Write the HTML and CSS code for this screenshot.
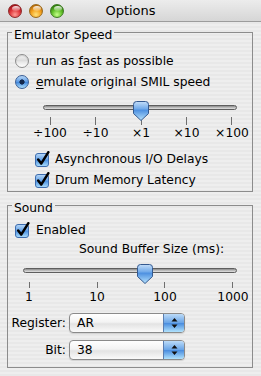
FILE: index.html
```html
<!DOCTYPE html>
<html>
<head>
<meta charset="utf-8">
<title>Options</title>
<link rel="stylesheet" href="styles.css">
</head>
<body>
<svg class="defs" width="0" height="0" aria-hidden="true">
  <defs>
    <linearGradient id="gAqua" x1="0" y1="0" x2="0" y2="1">
      <stop offset="0" stop-color="#b9d9f8"/>
      <stop offset="0.45" stop-color="#6aa6e8"/>
      <stop offset="0.5" stop-color="#4a8fe0"/>
      <stop offset="1" stop-color="#aee0fd"/>
    </linearGradient>
    <linearGradient id="gKnob" x1="0" y1="0" x2="0" y2="1">
      <stop offset="0" stop-color="#c4def9"/>
      <stop offset="0.4" stop-color="#6ea8e9"/>
      <stop offset="0.45" stop-color="#4c8fe0"/>
      <stop offset="1" stop-color="#b8e4fd"/>
    </linearGradient>
  </defs>
</svg>
<div class="window">
  <div class="titlebar">
    <div class="lights">
      <span class="light red"></span>
      <span class="light amber"></span>
      <span class="light green"></span>
    </div>
    <div class="title">Options</div>
    <div></div>
  </div>

  <div class="content">
    <fieldset class="group group-speed">
      <legend>Emulator Speed</legend>
      <div class="radio-row"><span class="radio"></span><span>run as <u>f</u>ast as possible</span></div>
      <div class="radio-row"><span class="radio on"></span><span><u>e</u>mulate original SMIL speed</span></div>

      <div class="slider slider-speed">
        <div class="track"></div>
        <div class="ticks"><i></i><i></i><i></i><i></i><i></i></div>
        <svg class="knob" style="--pos: 0.5" width="16" height="20" viewBox="0 0 16 20">
          <path d="M0.5 3.5 Q0.5 0.5 3.5 0.5 H12.5 Q15.5 0.5 15.5 3.5 V12.5 L8 19.5 L0.5 12.5 Z" fill="url(#gKnob)" stroke="#34598f"/>
        </svg>
      </div>
      <div class="scale scale-speed"><span>÷100</span><span>÷10</span><span>×1</span><span>×10</span><span>×100</span></div>

      <div class="check-row first">
        <svg class="cb" width="16" height="16" viewBox="0 0 16 16"><rect x="0.5" y="2.5" width="13" height="13" rx="2.5" fill="url(#gAqua)" stroke="#3e6cad"/><path d="M3.2 8.6 L6.2 12.6 L13.4 1.2" fill="none" stroke="#000" stroke-width="2.5" stroke-linecap="round" stroke-linejoin="round"/></svg>
        <span>Asynchronous I/O Delays</span>
      </div>
      <div class="check-row">
        <svg class="cb" width="16" height="16" viewBox="0 0 16 16"><rect x="0.5" y="2.5" width="13" height="13" rx="2.5" fill="url(#gAqua)" stroke="#3e6cad"/><path d="M3.2 8.6 L6.2 12.6 L13.4 1.2" fill="none" stroke="#000" stroke-width="2.5" stroke-linecap="round" stroke-linejoin="round"/></svg>
        <span>Drum Memory Latency</span>
      </div>
    </fieldset>

    <fieldset class="group group-sound">
      <legend>Sound</legend>
      <div class="check-row enabled">
        <svg class="cb" width="16" height="16" viewBox="0 0 16 16"><rect x="0.5" y="2.5" width="13" height="13" rx="2.5" fill="url(#gAqua)" stroke="#3e6cad"/><path d="M3.2 8.6 L6.2 12.6 L13.4 1.2" fill="none" stroke="#000" stroke-width="2.5" stroke-linecap="round" stroke-linejoin="round"/></svg>
        <span>Enabled</span>
      </div>
      <div class="buffer-label">Sound Buffer Size (ms):</div>

      <div class="slider slider-sound">
        <div class="track"></div>
        <div class="ticks"><i></i><i></i><i></i><i></i></div>
        <svg class="knob" style="--pos: 0.57" width="16" height="20" viewBox="0 0 16 20">
          <path d="M0.5 3.5 Q0.5 0.5 3.5 0.5 H12.5 Q15.5 0.5 15.5 3.5 V12.5 L8 19.5 L0.5 12.5 Z" fill="url(#gKnob)" stroke="#34598f"/>
        </svg>
      </div>
      <div class="scale scale-sound"><span>1</span><span>10</span><span>100</span><span>1000</span></div>

      <div class="popup-row first">
        <span class="popup-label">Register:</span>
        <div class="popup"><span class="popup-value">AR</span><span class="popup-arrows"><svg width="7" height="12" viewBox="0 0 7 12"><path d="M3.5 1 L6.5 4.5 H0.5 Z M3.5 11 L6.5 7.5 H0.5 Z" fill="#111"/></svg></span></div>
      </div>
      <div class="popup-row">
        <span class="popup-label">Bit:</span>
        <div class="popup"><span class="popup-value">38</span><span class="popup-arrows"><svg width="7" height="12" viewBox="0 0 7 12"><path d="M3.5 1 L6.5 4.5 H0.5 Z M3.5 11 L6.5 7.5 H0.5 Z" fill="#111"/></svg></span></div>
      </div>
    </fieldset>
  </div>
</div>
</body>
</html>
```

FILE: styles.css
```css
* { box-sizing: border-box; }
html, body { margin: 0; padding: 0; }
body {
  width: 261px;
  height: 376px;
  overflow: hidden;
  font-family: "DejaVu Sans", "Lucida Grande", sans-serif;
  font-size: 12.3px;
  color: #000;
  background: repeating-linear-gradient(to bottom, #eeeeee 0 2px, #e8e8e8 2px 4px);
}
.defs { position: absolute; width: 0; height: 0; }
u { text-decoration-thickness: 1px; text-underline-offset: 2px; }

.window { display: flex; flex-direction: column; height: 376px; }

/* title bar */
.titlebar {
  flex: none;
  height: 22px;
  display: grid;
  grid-template-columns: 1fr auto 1fr;
  align-items: center;
  background: linear-gradient(#ececec, #d6d6d6);
  border-bottom: 1px solid #9c9c9c;
}
.lights { display: flex; gap: 7px; padding-left: 8px; }
.light {
  width: 14px; height: 14px; border-radius: 50%;
  position: relative;
}
.light::after {
  content: "";
  position: absolute;
  left: 3px; top: 1px; width: 8px; height: 5px;
  border-radius: 50%;
  background: linear-gradient(rgba(255,255,255,0.9), rgba(255,255,255,0.15));
}
.red { background: radial-gradient(circle at 50% 80%, #ff9d95 0, #e0383c 45%, #a5121a 80%); border: 1px solid #8e2a2a; }
.amber { background: radial-gradient(circle at 50% 80%, #ffe27a 0, #f4a21e 45%, #b86a06 80%); border: 1px solid #9a6a1c; }
.green { background: radial-gradient(circle at 50% 80%, #c6ff8a 0, #62c02a 45%, #2f7d0c 80%); border: 1px solid #3e7a22; }
.title { font-size: 13px; }

/* content */
.content { flex: none; padding: 0 8px 0 7px; }
.group {
  margin: 0;
  padding: 0;
  min-width: 0;
  border: 1px solid #8c8c8c;
}
.group legend {
  margin-left: 4px;
  padding: 6px 2px 0;
  line-height: 14px;
}
.group-speed { padding: 8px 0 1px; }
.group-sound { margin-top: 3px; padding: 5px 0 7px; }

.radio-row {
  display: flex; align-items: center; gap: 7px;
  height: 21px; padding-left: 7px;
}
.radio {
  width: 14px; height: 14px; border-radius: 50%;
  border: 1px solid #8d8d8d;
  background: linear-gradient(#f4f4f4, #dadada 50%, #e6e6e6 55%, #ffffff);
  box-shadow: inset 0 1px 1px rgba(0,0,0,0.15);
}
.radio.on {
  border-color: #3b5f96;
  background:
    radial-gradient(circle, #14284c 0 2.3px, transparent 2.9px),
    linear-gradient(#b5d6f7, #5d9be4 48%, #4187dc 52%, #aedffc);
  box-shadow: none;
}

/* sliders */
.slider { position: relative; display: flow-root; }
.track {
  height: 5px;
  border-radius: 3px;
  border: 1px solid #5e5e5e;
  background: linear-gradient(#8a8a8a, #c4c4c4 60%, #e2e2e2);
}
.ticks { display: flex; justify-content: space-between; }
.ticks i { display: block; width: 1px; background: #6f6f6f; }
.knob {
  position: absolute;
  display: block;
}
.slider-speed { margin-left: 35px; width: 194px; height: 34px; }
.slider-speed .track { margin-top: 13px; }
.slider-speed .ticks { margin-top: 7px; height: 8px; padding: 0 5px 0 7px; }
.slider-speed .knob { top: 9px; left: calc(7px + 181px * var(--pos) - 7.5px); }

.slider-sound { margin-left: 15px; width: 214px; height: 32px; }
.slider-sound .track { margin-top: 11px; }
.slider-sound .ticks { margin-top: 9px; height: 6px; padding: 0 4px 0 6px; }
.slider-sound .knob { top: 7px; left: calc(6px + 203px * var(--pos) - 7.5px); }

.scale { display: flex; justify-content: space-between; }
.scale span { width: 40px; text-align: center; }
.scale-speed { padding-left: 22px; height: 14px; line-height: 14px; }
.scale-sound { padding-left: 1px; margin-right: -1px; height: 16px; line-height: 16px; }

/* checkboxes */
.check-row {
  display: flex; align-items: center; gap: 4px;
  height: 21px; padding-left: 27px;
}
.check-row.first { margin-top: 8px; }
.check-row.enabled { height: 20px; padding-left: 7px; gap: 5px; }
.cb { display: block; flex: none; }

.buffer-label {
  margin: 1px 0 0 71px;
  width: 143px;
  height: 16px;
  line-height: 16px;
  text-align: center;
  white-space: nowrap;
}

/* popups */
.popup-row {
  display: grid;
  grid-template-columns: 58px 116px;
  column-gap: 3px;
  align-items: center;
  height: 20px;
  margin-top: 7px;
}
.popup-row.first { margin-top: 8px; }
.popup-label { text-align: right; }
.popup {
  display: flex;
  height: 20px;
  border: 1px solid #8a8a8a;
  border-radius: 4px;
  overflow: hidden;
  background: linear-gradient(#ffffff, #f3f3f3 45%, #e3e3e3 55%, #fafafa);
  box-shadow: 0 1px 1px rgba(0,0,0,0.12);
}
.popup-value { flex: 1; padding-left: 7px; line-height: 18px; }
.popup-arrows {
  width: 21px;
  display: flex; align-items: center; justify-content: center;
  border-left: 1px solid #5a7db0;
  background: linear-gradient(#bcdbf8, #6aa5e7 48%, #4a8ddf 52%, #b0e2fd);
}
.popup-arrows svg { display: block; }
```
